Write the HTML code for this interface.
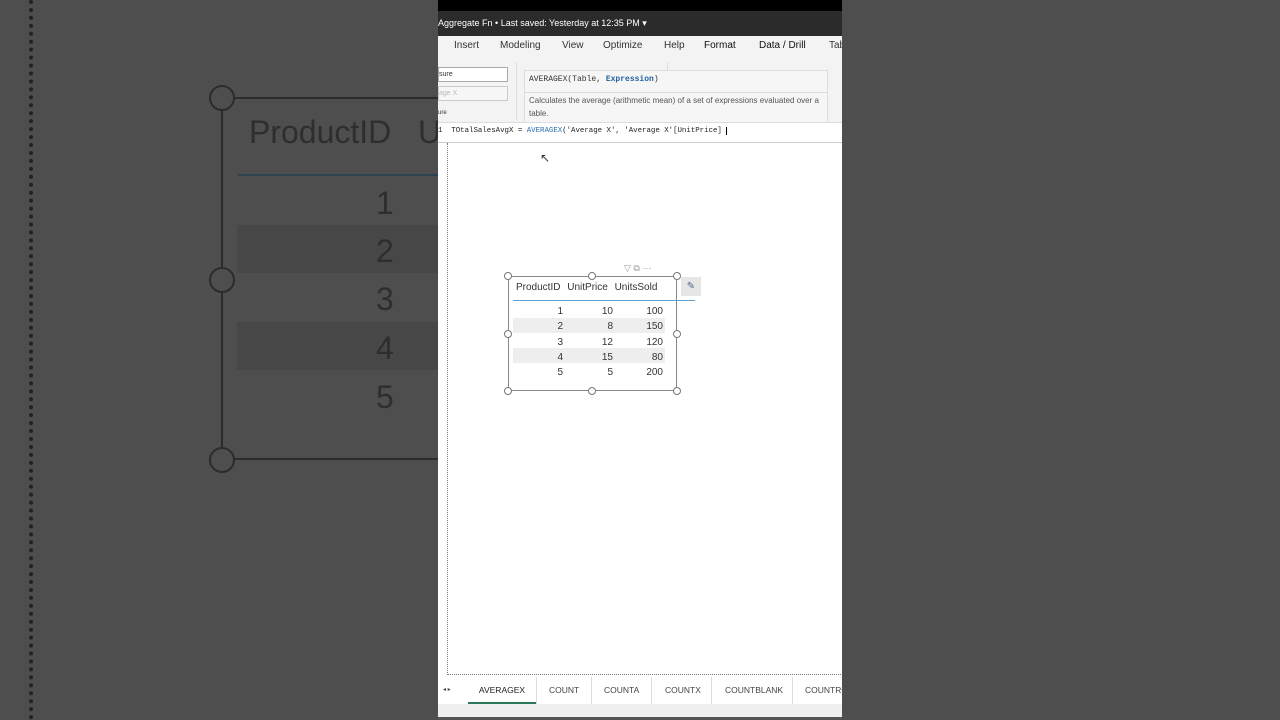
<!DOCTYPE html>
<html><head><style>
*{margin:0;padding:0;box-sizing:border-box}
body{width:1280px;height:720px;background:#4e4e4e;position:relative;overflow:hidden;font-family:"Liberation Sans",sans-serif}
.abs{position:absolute}
.bg-t{color:#2e2e2e;font-size:32px}
.mono{font-family:"Liberation Mono",monospace}
</style></head><body>
<div class="abs" style="left:29px;top:0;width:4px;height:720px;border-left:4px dotted #222"></div>
<div class="abs" style="left:221px;top:97px;width:230px;height:363px;border-left:2px solid #2c2c2c;border-top:2px solid #2c2c2c;border-bottom:2px solid #2c2c2c"></div>
<div class="abs" style="left:209px;top:85px;width:26px;height:26px;border:2px solid #2c2c2c;border-radius:50%;background:#4e4e4e"></div>
<div class="abs" style="left:209px;top:267px;width:26px;height:26px;border:2px solid #2c2c2c;border-radius:50%;background:#4e4e4e"></div>
<div class="abs" style="left:209px;top:447px;width:26px;height:26px;border:2px solid #2c2c2c;border-radius:50%;background:#4e4e4e"></div>
<div class="abs bg-t" style="left:249px;top:114px">ProductID&nbsp;&nbsp; U</div>
<div class="abs" style="left:238px;top:174px;width:200px;height:2px;background:#2c4250"></div>
<div class="abs" style="left:237px;top:225px;width:201px;height:48px;background:#474747"></div>
<div class="abs" style="left:237px;top:322px;width:201px;height:48px;background:#474747"></div>
<div class="abs bg-t" style="left:376px;top:185px">1</div>
<div class="abs bg-t" style="left:376px;top:233px">2</div>
<div class="abs bg-t" style="left:376px;top:281px">3</div>
<div class="abs bg-t" style="left:376px;top:330px">4</div>
<div class="abs bg-t" style="left:376px;top:379px">5</div>

<div class="abs" style="left:438px;top:0;width:404px;height:720px;background:#fff;overflow:hidden">
 <div class="abs" style="left:0;top:0;width:404px;height:11px;background:#000"></div>
 <div class="abs" style="left:0;top:11px;width:404px;height:25px;background:#2b2b2b;color:#fff;font-size:9px;line-height:25px">Aggregate Fn • Last saved: Yesterday at 12:35 PM ▾</div>
 <div class="abs" style="left:0;top:36px;width:404px;height:22px;background:#f3f3f3;font-size:10px;color:#333;line-height:20px">
  <span class="abs" style="left:16px">Insert</span><span class="abs" style="left:62px">Modeling</span><span class="abs" style="left:124px">View</span><span class="abs" style="left:165px">Optimize</span><span class="abs" style="left:226px">Help</span><span class="abs" style="left:266px;color:#111">Format</span><span class="abs" style="left:321px;color:#111">Data / Drill</span><span class="abs" style="left:391px">Tab</span>
 </div>
 <div class="abs" style="left:0;top:58px;width:404px;height:65px;background:#f3f3f3;border-bottom:1px solid #ddd">
  <div class="abs" style="left:0;top:9px;width:70px;height:15px;border:1px solid #aaa;background:#fff;font-size:7px;line-height:13px;color:#333">sure</div>
  <div class="abs" style="left:0;top:28px;width:70px;height:15px;border:1px solid #ccc;background:#f6f6f6;font-size:7px;line-height:13px;color:#bbb">age X</div>
  <div class="abs" style="left:0;top:52px;font-size:6px;color:#333">ure</div>
  <div class="abs" style="left:78px;top:4px;width:1px;height:58px;background:#ddd"></div>
  <div class="abs" style="left:229px;top:4px;width:1px;height:58px;background:#ddd"></div>
  <div class="abs" style="left:86px;top:12px;width:304px;height:53px;background:#f6f6f6;border:1px solid #ddd"></div>
  <div class="abs mono" style="left:91px;top:17px;font-size:8px;color:#333">AVERAGEX(Table, <span style="color:#1f5f9f;font-weight:bold">Expression</span>)</div>
  <div class="abs" style="left:87px;top:34px;width:302px;height:1px;background:#ddd"></div>
  <div class="abs" style="left:91px;top:37px;width:292px;font-size:8px;line-height:12.5px;color:#555">Calculates the average (arithmetic mean) of a set of expressions evaluated over a table.</div>
 </div>
 <div class="abs mono" style="left:0;top:127px;font-size:7.4px;color:#222;white-space:pre">1  TOtalSalesAvgX = <span style="color:#2a6fb0">AVERAGEX</span>('Average X', 'Average X'[UnitPrice] <span style="border-left:1px solid #000"></span></div>
 <div class="abs" style="left:0;top:142px;width:404px;height:1px;background:#ccc"></div>
 <div class="abs" style="left:9px;top:143px;width:400px;height:532px;border-left:1px dotted #777;border-bottom:1px dotted #777"></div>
 <div class="abs" style="left:102px;top:151px;font-size:12px;color:#333">&#x2196;</div>

 <div class="abs" style="left:70px;top:276px;width:169px;height:115px;border:1px solid #888"></div>
 <div class="abs" style="left:186px;top:263px;font-size:9px;color:#999">▽ ⧉ ···</div>
 <div class="abs" style="left:243px;top:277px;width:20px;height:19px;background:#e6e6e6;font-size:10px;color:#4a6b8a;text-align:center;line-height:19px">✎</div>
 <div class="abs" style="left:75px;top:300px;width:182px;height:1px;background:#5aa3d0"></div>
 <div class="abs" style="left:75px;top:318px;width:152px;height:15px;background:#eee"></div>
 <div class="abs" style="left:75px;top:348px;width:152px;height:15px;background:#eee"></div>
 <div class="abs" style="left:78px;top:282px;font-size:10px;color:#333;word-spacing:4px">ProductID UnitPrice UnitsSold</div>
 <div class="abs" style="left:75px;top:304px;width:150px;font-size:10px;color:#333;line-height:15.3px">
  <div style="display:flex"><span style="width:50px;text-align:right">1</span><span style="width:50px;text-align:right">10</span><span style="width:50px;text-align:right">100</span></div>
  <div style="display:flex"><span style="width:50px;text-align:right">2</span><span style="width:50px;text-align:right">8</span><span style="width:50px;text-align:right">150</span></div>
  <div style="display:flex"><span style="width:50px;text-align:right">3</span><span style="width:50px;text-align:right">12</span><span style="width:50px;text-align:right">120</span></div>
  <div style="display:flex"><span style="width:50px;text-align:right">4</span><span style="width:50px;text-align:right">15</span><span style="width:50px;text-align:right">80</span></div>
  <div style="display:flex"><span style="width:50px;text-align:right">5</span><span style="width:50px;text-align:right">5</span><span style="width:50px;text-align:right">200</span></div>
 </div>
 <div class="abs" style="left:66px;top:272px;width:8px;height:8px;border:1px solid #777;border-radius:50%;background:#fff"></div>
 <div class="abs" style="left:150px;top:272px;width:8px;height:8px;border:1px solid #777;border-radius:50%;background:#fff"></div>
 <div class="abs" style="left:235px;top:272px;width:8px;height:8px;border:1px solid #777;border-radius:50%;background:#fff"></div>
 <div class="abs" style="left:66px;top:330px;width:8px;height:8px;border:1px solid #777;border-radius:50%;background:#fff"></div>
 <div class="abs" style="left:235px;top:330px;width:8px;height:8px;border:1px solid #777;border-radius:50%;background:#fff"></div>
 <div class="abs" style="left:66px;top:387px;width:8px;height:8px;border:1px solid #777;border-radius:50%;background:#fff"></div>
 <div class="abs" style="left:150px;top:387px;width:8px;height:8px;border:1px solid #777;border-radius:50%;background:#fff"></div>
 <div class="abs" style="left:235px;top:387px;width:8px;height:8px;border:1px solid #777;border-radius:50%;background:#fff"></div>

 <div class="abs" style="left:0;top:677px;width:404px;height:43px;background:#f0f0f0"></div>
 <div class="abs" style="left:0;top:677px;width:404px;height:27px;background:#fff;font-size:8.5px;color:#444;line-height:27px">
  <span class="abs" style="left:5px;font-size:6px">◂ ▸</span>
  <div class="abs" style="left:30px;top:0;width:68px;height:27px;border-bottom:2px solid #2a7a5a;text-align:center;color:#222">AVERAGEX</div>
  <div class="abs" style="left:98px;width:1px;height:27px;background:#ddd"></div>
  <span class="abs" style="left:111px">COUNT</span>
  <div class="abs" style="left:153px;width:1px;height:27px;background:#ddd"></div>
  <span class="abs" style="left:166px">COUNTA</span>
  <div class="abs" style="left:213px;width:1px;height:27px;background:#ddd"></div>
  <span class="abs" style="left:227px">COUNTX</span>
  <div class="abs" style="left:273px;width:1px;height:27px;background:#ddd"></div>
  <span class="abs" style="left:287px">COUNTBLANK</span>
  <div class="abs" style="left:354px;width:1px;height:27px;background:#ddd"></div>
  <span class="abs" style="left:367px">COUNTRO</span>
 </div>
 <div class="abs" style="left:0;top:717px;width:404px;height:3px;background:#555"></div>
</div>
</body></html>
